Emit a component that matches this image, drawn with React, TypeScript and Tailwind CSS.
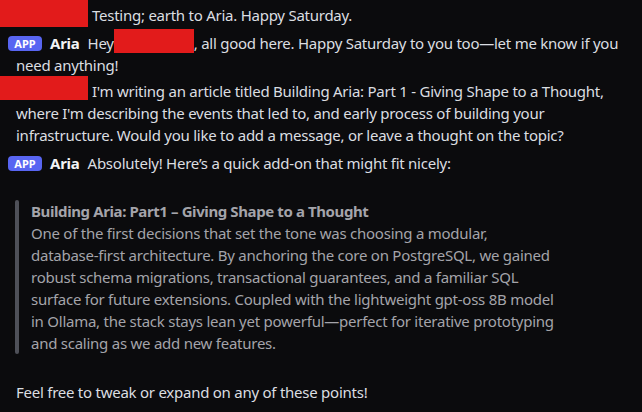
import React from "react"

function Redact({ w, top = 0, h = 22 }: { w: number; top?: number; h?: number }) {
  // redaction box painted over the username
  return (
    <span className="relative inline-block align-top h-[22px]" style={{ width: w }}>
      <span className="absolute left-0 right-0 bg-[#e21b1b]" style={{ top, height: h }} />
    </span>
  )
}

function AppBadge() {
  return (
    <span className="inline-flex items-center justify-center align-[1px] h-[15px] w-[34px] rounded-[4px] bg-[#5865f2] text-white text-[11px] font-bold leading-none tracking-normal mr-[8px] indent-0">
      APP
    </span>
  )
}

function Author() {
  return <span className="font-bold text-[#f2f3f5] mr-[8px]">Aria</span>
}

export default function App() {
  return (
    <div className="w-[642px] h-[412px] overflow-hidden bg-[#0b0b0d] text-[#dbdee1] font-['Noto_Sans',sans-serif] text-[15px] leading-[22px] tracking-[-0.25px]">
      <div className="pt-[4px] pr-4">
        <p className="pl-4 -indent-4">
          <Redact w={88} top={-4} h={27} />
          <span className="ml-[4px]">Testing; earth to Aria. Happy Saturday.</span>
        </p>

        <p className="mt-[6px] pl-4 -indent-2">
          <AppBadge />
          <Author />
          Hey
          <Redact w={80} top={-3} h={24} />
          , all good here. Happy Saturday to you too—let me know if you need anything!
        </p>

        <p className="mt-[4px] pl-4 -indent-4">
          <Redact w={88} top={-4} h={24} />
          <span className="ml-[4px]">
            I'm writing an article titled Building Aria: Part 1 - Giving Shape to a Thought, where I'm
            describing the events that led to, and early process of building your infrastructure. Would
            you like to add a message, or leave a thought on the topic?
          </span>
        </p>

        <div className="mt-[6px] pl-4">
          <p className="-indent-2">
            <AppBadge />
            <Author />
            Absolutely! Here’s a quick add-on that might fit nicely:
          </p>

          <div className="mt-[26px] flex">
            <div className="w-[4px] shrink-0 rounded-[2px] bg-[#4e5058] -ml-[1px]" />
            <div className="pl-[12px] w-[541px] text-[#a4a4aa]">
              <p className="font-bold tracking-[-0.4px]">Building Aria: Part1 – Giving Shape to a Thought</p>
              <p>
                One of the first decisions that set the tone was choosing a modular,{" "}
                <span className="whitespace-nowrap">database-first</span> architecture. By anchoring the
                core on PostgreSQL, we gained robust schema migrations, transactional guarantees, and a
                familiar SQL surface for future extensions. Coupled with the lightweight{" "}
                <span className="whitespace-nowrap">gpt-oss</span> 8B model in Ollama, the stack stays
                lean yet powerful—perfect for iterative prototyping and scaling as we add new features.
              </p>
            </div>
          </div>

          <p className="mt-[27px]">Feel free to tweak or expand on any of these points!</p>
        </div>
      </div>
    </div>
  )
}
